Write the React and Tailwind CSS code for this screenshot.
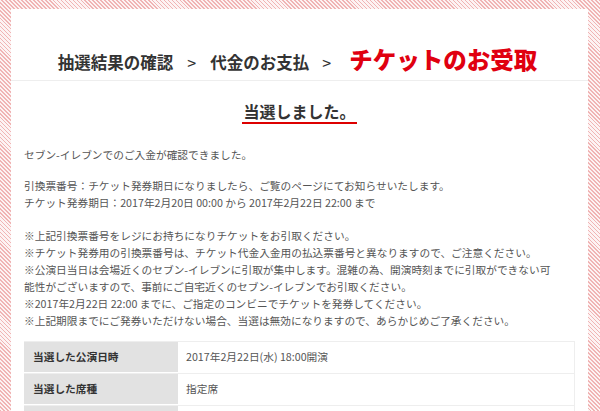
export default function App() {
    const rows = [
        ['当選した公演日時', '2017年2月22日(水) 18:00開演'],
        ['当選した席種', '指定席'],
        ['', ''],
    ];

    return (
        <div className="h-[411px] overflow-hidden pt-[9px] pl-[11px] pr-[12px]"
            style={{ background: 'repeating-linear-gradient(45deg, #f0b4b4 0 1.2px, #fdf3f3 1.2px 2.8px)' }}>
            <div className="bg-white h-[500px]"
                style={{ fontFamily: '"Noto Sans CJK JP", "Noto Sans", sans-serif' }}>

                {/* Steps */}
                <div className="h-[72px] flex items-baseline justify-center pt-[33px] pr-[4px] border-b border-[#eeeeee] text-[#333333] font-bold">
                    <span className="text-[16.5px]">抽選結果の確認</span>
                    <span className="text-[16px] mx-[14px] font-normal">&gt;</span>
                    <span className="text-[16.5px]">代金のお支払</span>
                    <span className="text-[16px] ml-[13px] mr-[18px] font-normal">&gt;</span>
                    <span className="text-[23.5px] font-black text-[#e00010]">チケットのお受取</span>
                </div>

                {/* Body */}
                <div className="px-[13px]">
                    <div className="text-center mt-[18px]">
                        <span className="inline-block text-[16px] leading-[20px] font-bold text-[#333333] border-b-2 border-[#dd0000] px-[1px] pb-[1px]">
                            当選しました。
                        </span>
                    </div>

                    <div className="text-[10.7px] leading-[17px] text-[#555555] whitespace-nowrap">
                        <p className="mt-[22px]">セブン-イレブンでのご入金が確認できました。</p>
                        <p className="mt-[14px]">
                            引換票番号：チケット発券期日になりましたら、ご覧のページにてお知らせいたします。<br />
                            チケット発券期日：2017年2月20日 00:00 から 2017年2月22日 22:00 まで
                        </p>
                        <p className="mt-[16px]">
                            ※上記引換票番号をレジにお持ちになりチケットをお引取ください。<br />
                            ※チケット発券用の引換票番号は、チケット代金入金用の払込票番号と異なりますので、ご注意ください。<br />
                            ※公演日当日は会場近くのセブン-イレブンに引取が集中します。混雑の為、開演時刻までに引取ができない可<br />
                            能性がございますので、事前にご自宅近くのセブン-イレブンでお引取ください。<br />
                            ※2017年2月22日 22:00 までに、ご指定のコンビニでチケットを発券してください。<br />
                            ※上記期限までにご発券いただけない場合、当選は無効になりますので、あらかじめご了承ください。
                        </p>
                    </div>

                    {/* Table */}
                    <div className="mt-[12px] border-t border-[#eeeeee]">
                        {rows.map(([k, v], i) => (
                            <div key={i} className="flex h-[32px] border-b border-[#eeeeee]">
                                <div className="w-[154px] shrink-0 bg-[#e2e2e2] flex items-center pl-[9px] text-[10.7px] font-bold text-[#333333] border-b border-white">
                                    {k}
                                </div>
                                <div className="flex-1 flex items-center pl-[8px] text-[10.7px] text-[#555555] border-r border-[#eeeeee]">
                                    {v}
                                </div>
                            </div>
                        ))}
                    </div>
                </div>
            </div>
        </div>
    );
}
